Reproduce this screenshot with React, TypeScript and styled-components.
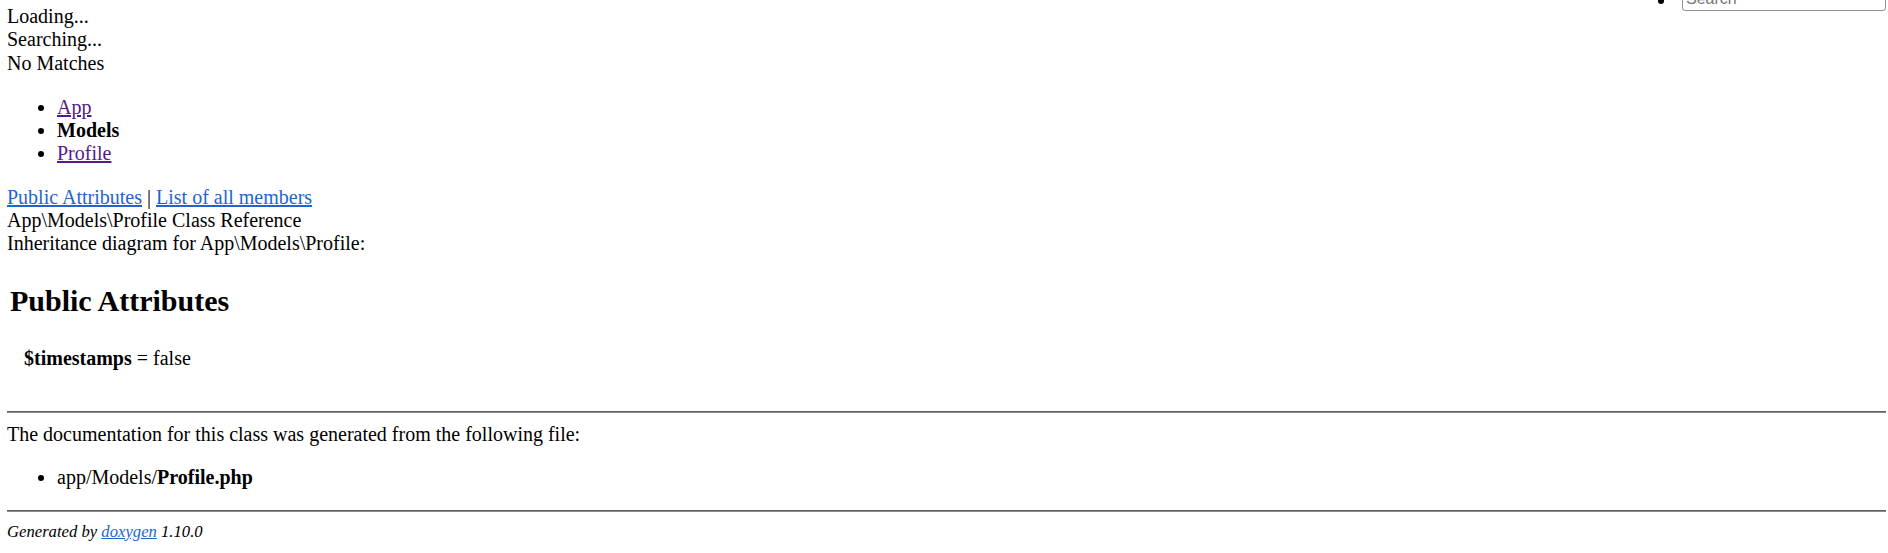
import React from "react";
import styled, { createGlobalStyle } from "styled-components";

const Global = createGlobalStyle`
  html, body { background: #ffffff; }
  body {
    margin: 0 2px 0 7px;
    font-family: "Liberation Serif", "Times New Roman", serif;
    font-size: 20px;
    line-height: 1.165;
    color: #000000;
  }
`;

const TopBar = styled.div`
  display: flex;
  justify-content: space-between;
  align-items: flex-start;
  padding-top: 5px;
`;

const StatusList = styled.div``;

const StatusLine = styled.div``;

const SearchMenu = styled.ul`
  margin: -18.3px 0 0;
  padding: 0 0 0 2.5em;
  list-style: disc;
`;

const SearchItem = styled.li``;

const SearchField = styled.input`
  box-sizing: border-box;
  width: 204px;
  height: 24px;
  margin: 0 0 0 5.4px;
  padding: 1px 3px;
  vertical-align: 3px;
  border: 1px solid #8f8f9d;
  border-radius: 3px;
  background: #ffffff;
  font-family: "Liberation Sans", Arial, sans-serif;
  font-size: 16px;
  &::placeholder { color: #757575; }
`;

const BulletList = styled.ul<{ $top?: number }>`
  margin: ${(p) => (p.$top ? `${p.$top}px` : "1em")} 0 1em;
  padding: 0 0 0 2.5em;
  list-style: disc;
`;

const BulletItem = styled.li``;

const VisitedLink = styled.a`
  color: #551a8b;
  text-decoration: underline;
`;

const Link = styled.a`
  color: #1a66d2;
  text-decoration: underline;
`;

const Line = styled.div``;

const MemberTable = styled.table`
  border-collapse: separate;
  border-spacing: 2px;
  font: inherit;
  margin-bottom: 4px;
`;

const Cell = styled.td<{ $w?: number }>`
  padding: 1px;
  vertical-align: top;
  ${(p) => (p.$w ? `width: ${p.$w}px;` : "")}
`;

const GroupHeader = styled.h2`
  font-size: 1.5em;
  font-weight: bold;
  margin: 0.83em 0;
`;

const Rule = styled.hr`
  margin: 0.5em 0;
  height: 0;
  border: 0;
  border-top: 1px solid #5f5f5f;
  border-bottom: 1px solid #8c8c8c;
`;

const Footer = styled.address`
  font-style: italic;
  font-size: 0.8333em;
`;

export default function App() {
  return (
    <>
      <Global />
      <TopBar>
        <StatusList>
          <StatusLine>Loading...</StatusLine>
          <StatusLine>Searching...</StatusLine>
          <StatusLine>No Matches</StatusLine>
        </StatusList>
        <SearchMenu>
          <SearchItem>
            <SearchField type="text" placeholder="Search" />
          </SearchItem>
        </SearchMenu>
      </TopBar>
      <BulletList $top={21}>
        <BulletItem>
          <VisitedLink href="#">App</VisitedLink>
        </BulletItem>
        <BulletItem>
          <b>Models</b>
        </BulletItem>
        <BulletItem>
          <VisitedLink href="#">Profile</VisitedLink>
        </BulletItem>
      </BulletList>
      <Line>
        <Link href="#">Public Attributes</Link> | <Link href="#">List of all members</Link>
      </Line>
      <Line>{"App\\Models\\Profile Class Reference"}</Line>
      <Line>{"Inheritance diagram for App\\Models\\Profile:"}</Line>
      <MemberTable>
        <tbody>
          <tr>
            <Cell colSpan={2}>
              <GroupHeader>Public Attributes</GroupHeader>
            </Cell>
          </tr>
          <tr>
            <Cell $w={10}>{"\u00a0"}</Cell>
            <Cell>
              <b>$timestamps</b> = false
            </Cell>
          </tr>
          <tr>
            <Cell colSpan={2}>{"\u00a0"}</Cell>
          </tr>
        </tbody>
      </MemberTable>
      <Rule />
      <Line>The documentation for this class was generated from the following file:</Line>
      <BulletList>
        <BulletItem>
          app/Models/<b>Profile.php</b>
        </BulletItem>
      </BulletList>
      <Rule />
      <Footer>
        Generated by <Link href="#">doxygen</Link> 1.10.0
      </Footer>
    </>
  );
}
